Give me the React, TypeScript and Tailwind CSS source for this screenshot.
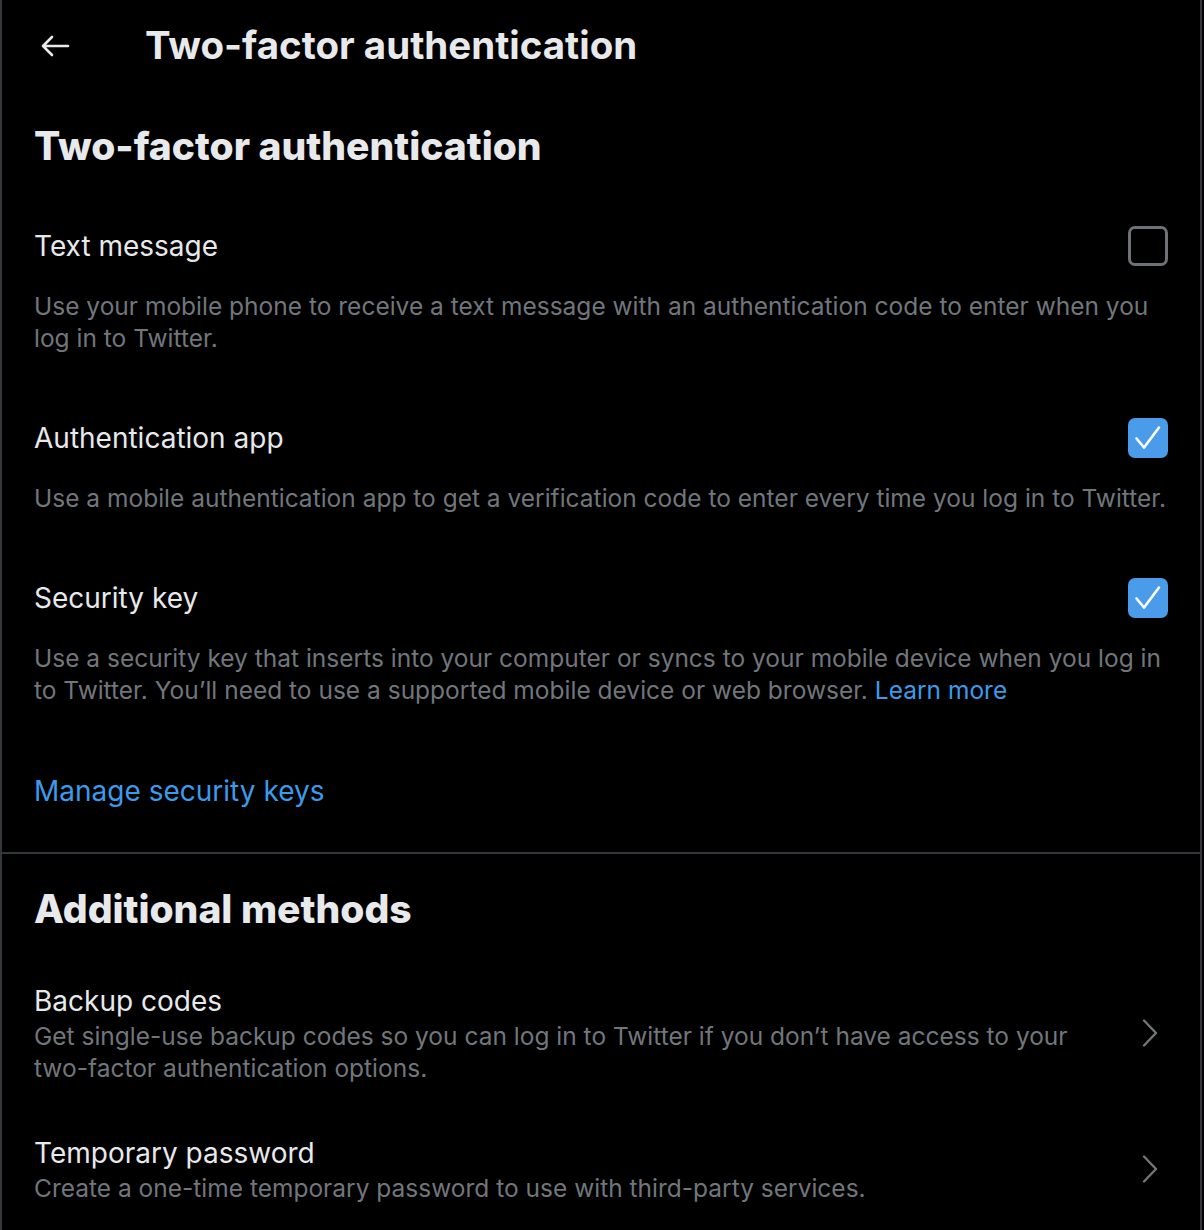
function Checkbox({ checked }: { checked: boolean }) {
  return checked ? (
    <div className="w-10 h-10 rounded-[7px] bg-[#4a9be9] shrink-0">
      <svg viewBox="0 0 40 40" className="w-10 h-10" fill="none" stroke="white" strokeWidth={2.6} strokeLinecap="round" strokeLinejoin="round">
        <polyline points="8.5,20.5 16,29.5 31,9.5" />
      </svg>
    </div>
  ) : (
    <div className="w-10 h-10 rounded-[7px] border-[3px] border-[#6e7175] shrink-0" />
  );
}

function Option({
  title,
  checked,
  children,
}: {
  title: string;
  checked: boolean;
  children: React.ReactNode;
}) {
  return (
    <div className="pt-[20px] pb-[44px]">
      <div className="flex items-center justify-between h-10">
        <span className="text-[28px] text-[#e7e9ea]">{title}</span>
        <Checkbox checked={checked} />
      </div>
      <p className="mt-[24px] text-[24.5px] leading-[32px] text-[#71767b]">{children}</p>
    </div>
  );
}

function MethodRow({ title, desc }: { title: string; desc: string }) {
  return (
    <div className="flex items-center justify-between py-[25px]">
      <div className="pr-10">
        <div className="text-[28px] leading-[38px] text-[#e7e9ea]">{title}</div>
        <p className="text-[24.5px] leading-[32px] text-[#71767b]">{desc}</p>
      </div>
      <svg viewBox="0 0 16 28" className="w-4 h-7 shrink-0 mr-[10px]" fill="none" stroke="#71767b" strokeWidth={2.4} strokeLinecap="round" strokeLinejoin="round">
        <polyline points="2,1.5 14,14 2,26.5" />
      </svg>
    </div>
  );
}

export default function App() {
  return (
    <div className="w-[1204px] h-[1230px] bg-black">
      <div
        className="w-[1202px] h-[1230px] bg-black border-x-2 border-[#34383c] overflow-hidden"
        style={{ fontFamily: "Inter, 'Noto Sans', sans-serif" }}
      >
        {/* Header */}
        <div className="flex items-center h-[92px] pl-[38px]">
          <svg viewBox="0 0 30 24" className="w-[30px] h-6" fill="none" stroke="#e7e9ea" strokeWidth={2.6} strokeLinecap="round" strokeLinejoin="round">
            <path d="M28 12H3M12 3L3 12L12 21" />
          </svg>
          <h1 className="ml-[75px] text-[38.5px] font-bold text-[#e7e9ea]">Two-factor authentication</h1>
        </div>

        <div className="px-[32px]">
          <h2 className="mt-[32px] text-[39px] font-extrabold text-[#e7e9ea] leading-[44px]">
            Two-factor authentication
          </h2>

          <div className="mt-[38px]">
            <Option title="Text message" checked={false}>
              Use your mobile phone to receive a text message with an authentication code to enter when you log in to Twitter.
            </Option>
            <Option title="Authentication app" checked>
              Use a mobile authentication app to get a verification code to enter every time you log in to Twitter.
            </Option>
            <Option title="Security key" checked>
              Use a security key that inserts into your computer or syncs to your mobile device when you log in to Twitter. You’ll need to use a supported mobile device or web browser.{" "}
              <span className="text-[#3b9bea]">Learn more</span>
            </Option>
          </div>

          <div className="pt-[25px] pb-[45px] text-[28px] leading-[32px] text-[#3b9bea]">Manage security keys</div>
        </div>

        <div className="border-t-2 border-[#34383c]" />

        <div className="px-[32px]">
          <h2 className="mt-[33px] text-[39px] font-extrabold text-[#e7e9ea] leading-[44px]">
            Additional methods
          </h2>
          <div className="mt-[26px]">
            <MethodRow
              title="Backup codes"
              desc="Get single-use backup codes so you can log in to Twitter if you don’t have access to your two-factor authentication options."
            />
            <MethodRow
              title="Temporary password"
              desc="Create a one-time temporary password to use with third-party services."
            />
          </div>
        </div>
      </div>
    </div>
  );
}
